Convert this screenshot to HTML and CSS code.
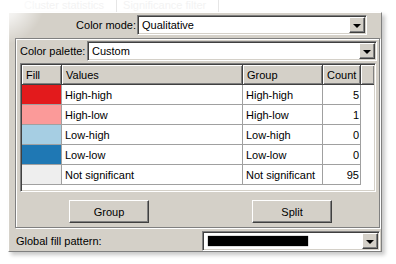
FILE: index.html
```html
<!DOCTYPE html>
<html lang="en">
<head>
    <meta charset="UTF-8">
    <title>Color palette</title>
    <link rel="stylesheet" href="styles.css">
</head>
<body>
    <div class="tabs">
        <span class="tab">Cluster statistics</span>
        <span class="tab">Significance filter</span>
    </div>

    <div class="window">
        <div class="mode-row">
            <label class="mode-label">Color mode:</label>
            <div class="combo mode-combo">
                <span class="combo-text">Qualitative</span>
                <span class="drop-btn"><span class="arrow"></span></span>
            </div>
        </div>

        <div class="palette-box">
            <div class="palette-row">
                <label class="palette-label">Color palette:</label>
                <div class="combo palette-combo">
                    <span class="combo-text">Custom</span>
                    <span class="drop-btn"><span class="arrow"></span></span>
                </div>
            </div>

            <div class="list">
                <table class="list-table">
                    <colgroup>
                        <col style="width:40px">
                        <col style="width:181px">
                        <col style="width:80px">
                        <col style="width:38px">
                        <col>
                    </colgroup>
                    <thead>
                        <tr>
                            <th>Fill</th>
                            <th>Values</th>
                            <th>Group</th>
                            <th>Count</th>
                            <th class="blank"></th>
                        </tr>
                    </thead>
                    <tbody>
                        <tr>
                            <td class="swatch hh"></td>
                            <td>High-high</td>
                            <td>High-high</td>
                            <td class="num">5</td>
                            <td class="empty"></td>
                        </tr>
                        <tr>
                            <td class="swatch hl"></td>
                            <td>High-low</td>
                            <td>High-low</td>
                            <td class="num">1</td>
                            <td class="empty"></td>
                        </tr>
                        <tr>
                            <td class="swatch lh"></td>
                            <td>Low-high</td>
                            <td>Low-high</td>
                            <td class="num">0</td>
                            <td class="empty"></td>
                        </tr>
                        <tr>
                            <td class="swatch ll"></td>
                            <td>Low-low</td>
                            <td>Low-low</td>
                            <td class="num">0</td>
                            <td class="empty"></td>
                        </tr>
                        <tr>
                            <td class="swatch ns"></td>
                            <td>Not significant</td>
                            <td>Not significant</td>
                            <td class="num">95</td>
                            <td class="empty"></td>
                        </tr>
                    </tbody>
                </table>
            </div>

            <div class="button-row">
                <button class="btn">Group</button>
                <button class="btn">Split</button>
            </div>
        </div>

        <div class="global-row">
            <label class="global-label">Global fill pattern:</label>
            <div class="combo global-combo">
                <span class="pattern"></span>
                <span class="drop-btn"><span class="arrow"></span></span>
            </div>
        </div>
    </div>

    <div class="fade"></div>
</body>
</html>
```

FILE: styles.css
```css
* {
    box-sizing: border-box;
}
body {
    margin: 0;
    width: 396px;
    height: 264px;
    overflow: hidden;
    position: relative;
    background: #fff;
    font-family: "Liberation Sans", Arial, sans-serif;
    font-size: 11px;
    color: #000;
}

/* faded tab strip above the panel */
.tabs {
    height: 12px;
    display: flex;
    padding-left: 18px;
    color: #f3f3f3;
    line-height: 10px;
}
.tab {
    padding: 0 12px 0 6px;
    border-right: 1px solid #e6e6e6;
}

.window {
    margin-left: 8px;
    width: 374px;
    height: 240px;
    background: #d4d0c8;
    border: 1px solid;
    border-color: #fff #808080 #808080 #fff;
    box-shadow: 3px 3px 4px rgba(0, 0, 0, 0.22);
    display: flex;
    flex-direction: column;
}

/* sunken combo box */
.combo {
    height: 20px;
    background: #fff;
    border: 1px solid;
    border-color: #808080 #fff #fff #808080;
    box-shadow: inset 1px 1px 0 #404040, inset -1px -1px 0 #d4d0c8;
    display: flex;
    align-items: center;
    padding: 1px;
}
.combo-text {
    flex: 1;
    padding-left: 3px;
}
.drop-btn {
    width: 16px;
    height: 16px;
    background: #d4d0c8;
    border: 1px solid;
    border-color: #fff #404040 #404040 #fff;
    box-shadow: inset -1px -1px 0 #808080;
    display: flex;
    justify-content: center;
    align-items: center;
}
.arrow {
    width: 0;
    height: 0;
    border-left: 4px solid transparent;
    border-right: 4px solid transparent;
    border-top: 4px solid #000;
    margin-top: 1px;
}

.mode-row {
    display: flex;
    align-items: center;
    margin-top: 2px;
    padding-right: 14px;
}
.mode-label {
    flex: 1;
    text-align: right;
    padding-right: 1px;
}
.mode-combo {
    width: 230px;
}

.palette-box {
    margin: 3px 0 0 6px;
    width: 365px;
    height: 190px;
    border: 1px solid #808080;
    box-shadow: inset 1px 1px 0 #fff, 1px 1px 0 #fff;
    padding: 2px 2px 0 4px;
}
.palette-row {
    display: flex;
    align-items: center;
}
.palette-label {
    width: 67px;
    white-space: nowrap;
}
.palette-combo {
    flex: 1;
}

/* list view */
.list {
    margin-top: 2px;
    width: 356px;
    height: 129px;
    background: #fff;
    border: 1px solid;
    border-color: #808080 #fff #fff #808080;
    box-shadow: inset 1px 1px 0 #404040, inset -1px -1px 0 #d4d0c8;
    padding: 1px;
    overflow: hidden;
}
.list-table {
    width: 352px;
    border-spacing: 0;
    table-layout: fixed;
}
.list-table th {
    height: 20px;
    background: #d4d0c8;
    font-weight: normal;
    text-align: left;
    padding: 0 0 0 4px;
    border-right: 1px solid #404040;
    border-bottom: 1px solid #404040;
    box-shadow: inset 1px 1px 0 #fff, inset -1px -1px 0 #808080;
    white-space: nowrap;
}
.list-table th.blank {
    border-right: none;
}
.list-table td {
    height: 20px;
    padding: 0 0 0 3px;
    border-right: 1px solid #a0a0a0;
    border-bottom: 1px solid #a0a0a0;
    white-space: nowrap;
}
.list-table td.num {
    text-align: right;
    padding: 0 1px 0 0;
}
.list-table td.empty {
    border: none;
}
.swatch.hh { background: #e31a1c; }
.swatch.hl { background: #fb9a99; }
.swatch.lh { background: #a6cee3; }
.swatch.ll { background: #1f78b4; }
.swatch.ns { background: #eeeeee; }

.button-row {
    display: flex;
    gap: 103px;
    margin-top: 8px;
    padding-left: 49px;
}
.btn {
    width: 80px;
    height: 23px;
    background: #d4d0c8;
    border: 1px solid;
    border-color: #fff #404040 #404040 #fff;
    box-shadow: inset -1px -1px 0 #808080;
    font-family: "Liberation Sans", Arial, sans-serif;
    font-size: 11px;
    color: #000;
    padding: 0;
}

.global-row {
    display: flex;
    align-items: center;
    margin-top: 3px;
    padding-left: 7px;
}
.global-label {
    width: 186px;
}
.global-combo {
    width: 178px;
}
.pattern {
    width: 100px;
    height: 10px;
    margin: 0 auto 0 4px;
    background: #000;
    box-shadow: 0 0 1px #333;
}

/* soft white vignette over the top-left corner */
.fade {
    position: absolute;
    left: 0;
    top: 0;
    width: 396px;
    height: 264px;
    pointer-events: none;
    background:
        radial-gradient(circle at 0 0, #fff 0, rgba(255, 255, 255, 0.7) 20px, rgba(255, 255, 255, 0) 45px),
        linear-gradient(to right, rgba(255, 255, 255, 0.85) 0, rgba(255, 255, 255, 0) 10px);
}
```
